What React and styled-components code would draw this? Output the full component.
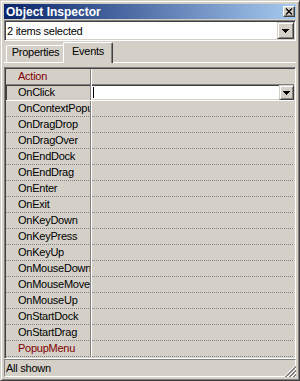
import React from 'react';
import styled, { createGlobalStyle } from 'styled-components';

// Windows classic palette
const FACE = '#d4d0c8';
const SHADOW = '#808080';
const DARK = '#404040';
const LIGHT = '#ffffff';

const GlobalStyle = createGlobalStyle`
  html, body {
    margin: 0;
    padding: 0;
    background: ${FACE};
  }
  body {
    font-family: "Liberation Sans", Arial, sans-serif;
  }
`;

const Window = styled.div`
  box-sizing: border-box;
  width: 300px;
  height: 381px;
  display: flex;
  flex-direction: column;
  padding: 3px;
  background: ${FACE};
  border: 1px solid;
  border-color: ${FACE} ${DARK} ${DARK} ${FACE};
  box-shadow: inset 1px 1px ${LIGHT}, inset -1px -1px ${SHADOW};
  font-size: 11px;
  letter-spacing: -0.25px;
  color: #000;
`;

const TitleBar = styled.div`
  height: 15px;
  margin-bottom: 1px;
  display: flex;
  align-items: center;
  justify-content: space-between;
  padding: 0 1px 0 2px;
  background: linear-gradient(to right, #0a246a, #a6caf0);
  color: #fff;
  font-weight: bold;
  font-size: 12px;
  letter-spacing: 0;
`;

const CloseButton = styled.div`
  box-sizing: border-box;
  width: 12px;
  height: 11px;
  display: flex;
  align-items: center;
  justify-content: center;
  background: ${FACE};
  border: 1px solid;
  border-color: ${LIGHT} ${DARK} ${DARK} ${LIGHT};
  box-shadow: inset -1px -1px ${SHADOW};
`;

const Combo = styled.div`
  box-sizing: border-box;
  height: 21px;
  display: flex;
  align-items: center;
  padding: 1px;
  background: #fff;
  border: 1px solid;
  border-color: ${SHADOW} ${LIGHT} ${LIGHT} ${SHADOW};
  box-shadow: inset 1px 1px ${DARK}, inset -1px -1px ${FACE};
`;

const ComboText = styled.div`
  flex: 1;
  padding-left: 1px;
  white-space: nowrap;
`;

const DropButton = styled.div`
  box-sizing: border-box;
  width: ${p => p.$w}px;
  height: ${p => p.$h}px;
  display: flex;
  align-items: center;
  justify-content: center;
  background: ${FACE};
  border: 1px solid;
  border-color: ${FACE} ${DARK} ${DARK} ${FACE};
  box-shadow: inset 1px 1px ${LIGHT}, inset -1px -1px ${SHADOW};
`;

const TabStrip = styled.div`
  box-sizing: border-box;
  height: 22px;
  display: flex;
  align-items: flex-end;
  padding-left: 2px;
  border-bottom: 1px solid ${LIGHT};
`;

const Tab = styled.div`
  box-sizing: border-box;
  width: ${p => p.$w}px;
  height: ${p => (p.$active ? 21 : 17)}px;
  margin-left: ${p => (p.$active ? -2 : 0)}px;
  margin-bottom: ${p => (p.$active ? -1 : 0)}px;
  padding-top: ${p => (p.$active ? 2 : 0)}px;
  display: flex;
  justify-content: center;
  line-height: 13px;
  background: ${FACE};
  border: 1px solid;
  border-bottom: none;
  border-color: ${LIGHT} ${DARK} ${LIGHT} ${LIGHT};
  box-shadow: inset -1px 0 ${SHADOW};
  border-top-left-radius: 2px;
  border-top-right-radius: 2px;
`;

const Grid = styled.div`
  flex: 1;
  margin-top: 4px;
  display: flex;
  flex-direction: column;
  padding: 1px;
  border: 1px solid;
  border-color: ${SHADOW} ${LIGHT} ${LIGHT} ${SHADOW};
  box-shadow: inset 1px 1px ${DARK}, inset -1px -1px ${FACE};
`;

const dotted = `repeating-linear-gradient(to right, ${SHADOW} 0 1px, transparent 1px 2px) left bottom / 100% 1px no-repeat`;
const solid = `linear-gradient(${SHADOW}, ${SHADOW}) left bottom / 100% 1px no-repeat`;

const Row = styled.div`
  box-sizing: border-box;
  height: 16px;
  display: flex;
  line-height: 15px;
  background: ${p => (p.$selected ? 'none' : p.$beforeSelected ? solid : dotted)};
  border-bottom: ${p => (p.$selected ? `1px solid ${LIGHT}` : 'none')};
  box-shadow: ${p => (p.$selected ? `inset 1px 1px ${DARK}` : 'none')};
`;

const NameCell = styled.div`
  box-sizing: border-box;
  width: 85px;
  padding-left: 12px;
  border-right: 1px solid ${SHADOW};
  white-space: nowrap;
  overflow: hidden;
  color: ${p => (p.$special ? '#800000' : '#000')};
`;

const ValueCell = styled.div`
  flex: 1;
  display: flex;
  border-left: 1px solid ${LIGHT};
`;

const Edit = styled.div`
  flex: 1;
  height: 13px;
  margin-top: 1px;
  background: #fff;
  display: flex;
  align-items: center;
`;

const Caret = styled.div`
  width: 1px;
  height: 11px;
  margin-left: 1px;
  background: #000;
`;

const StatusBar = styled.div`
  position: relative;
  height: 18px;
  display: flex;
`;

const StatusPanel = styled.div`
  flex: 1;
  padding-left: 1px;
  display: flex;
  align-items: center;
  border: 1px solid;
  border-color: ${SHADOW} ${LIGHT} ${LIGHT} ${SHADOW};
`;

const Grip = styled.svg`
  position: absolute;
  right: 0;
  bottom: 0;
`;

const Arrow = () => (
  <svg width="7" height="4" shapeRendering="crispEdges">
    <path d="M0 0h7v1h-1v1h-1v1h-1v1h-1v-1h-1v-1h-1v-1h-1z" fill="#000" />
  </svg>
);

const events = [
  { name: 'Action', special: true },
  { name: 'OnClick', selected: true },
  { name: 'OnContextPopup' },
  { name: 'OnDragDrop' },
  { name: 'OnDragOver' },
  { name: 'OnEndDock' },
  { name: 'OnEndDrag' },
  { name: 'OnEnter' },
  { name: 'OnExit' },
  { name: 'OnKeyDown' },
  { name: 'OnKeyPress' },
  { name: 'OnKeyUp' },
  { name: 'OnMouseDown' },
  { name: 'OnMouseMove' },
  { name: 'OnMouseUp' },
  { name: 'OnStartDock' },
  { name: 'OnStartDrag' },
  { name: 'PopupMenu', special: true },
];

function App() {
  return (
    <>
      <GlobalStyle />
      <Window>
        <TitleBar>
          <span>Object Inspector</span>
          <CloseButton>
            <svg width="8" height="7">
              <path d="M1 0.5L7 6.5M7 0.5L1 6.5" stroke="#000" strokeWidth="1.3" />
            </svg>
          </CloseButton>
        </TitleBar>

        <Combo>
          <ComboText>2 items selected</ComboText>
          <DropButton $w={17} $h={17}>
            <Arrow />
          </DropButton>
        </Combo>

        <TabStrip>
          <Tab $w={59}>Properties</Tab>
          <Tab $w={50} $active>Events</Tab>
        </TabStrip>

        <Grid>
          {events.map((ev, i) => (
            <Row
              key={ev.name}
              $selected={ev.selected}
              $beforeSelected={events[i + 1] && events[i + 1].selected}
            >
              <NameCell $special={ev.special}>{ev.name}</NameCell>
              <ValueCell>
                {ev.selected && (
                  <>
                    <Edit>
                      <Caret />
                    </Edit>
                    <DropButton $w={15} $h={15}>
                      <Arrow />
                    </DropButton>
                  </>
                )}
              </ValueCell>
            </Row>
          ))}
        </Grid>

        <StatusBar>
          <StatusPanel>All shown</StatusPanel>
          <Grip width="12" height="12">
            {[0, 4, 8].map(o => (
              <g key={o}>
                <path d={`M${o} 12L12 ${o}`} stroke="#fff" />
                <path d={`M${o + 1} 12L12 ${o + 1}`} stroke="#808080" />
                <path d={`M${o + 2} 12L12 ${o + 2}`} stroke="#808080" />
              </g>
            ))}
          </Grip>
        </StatusBar>
      </Window>
    </>
  );
}

export default App;
